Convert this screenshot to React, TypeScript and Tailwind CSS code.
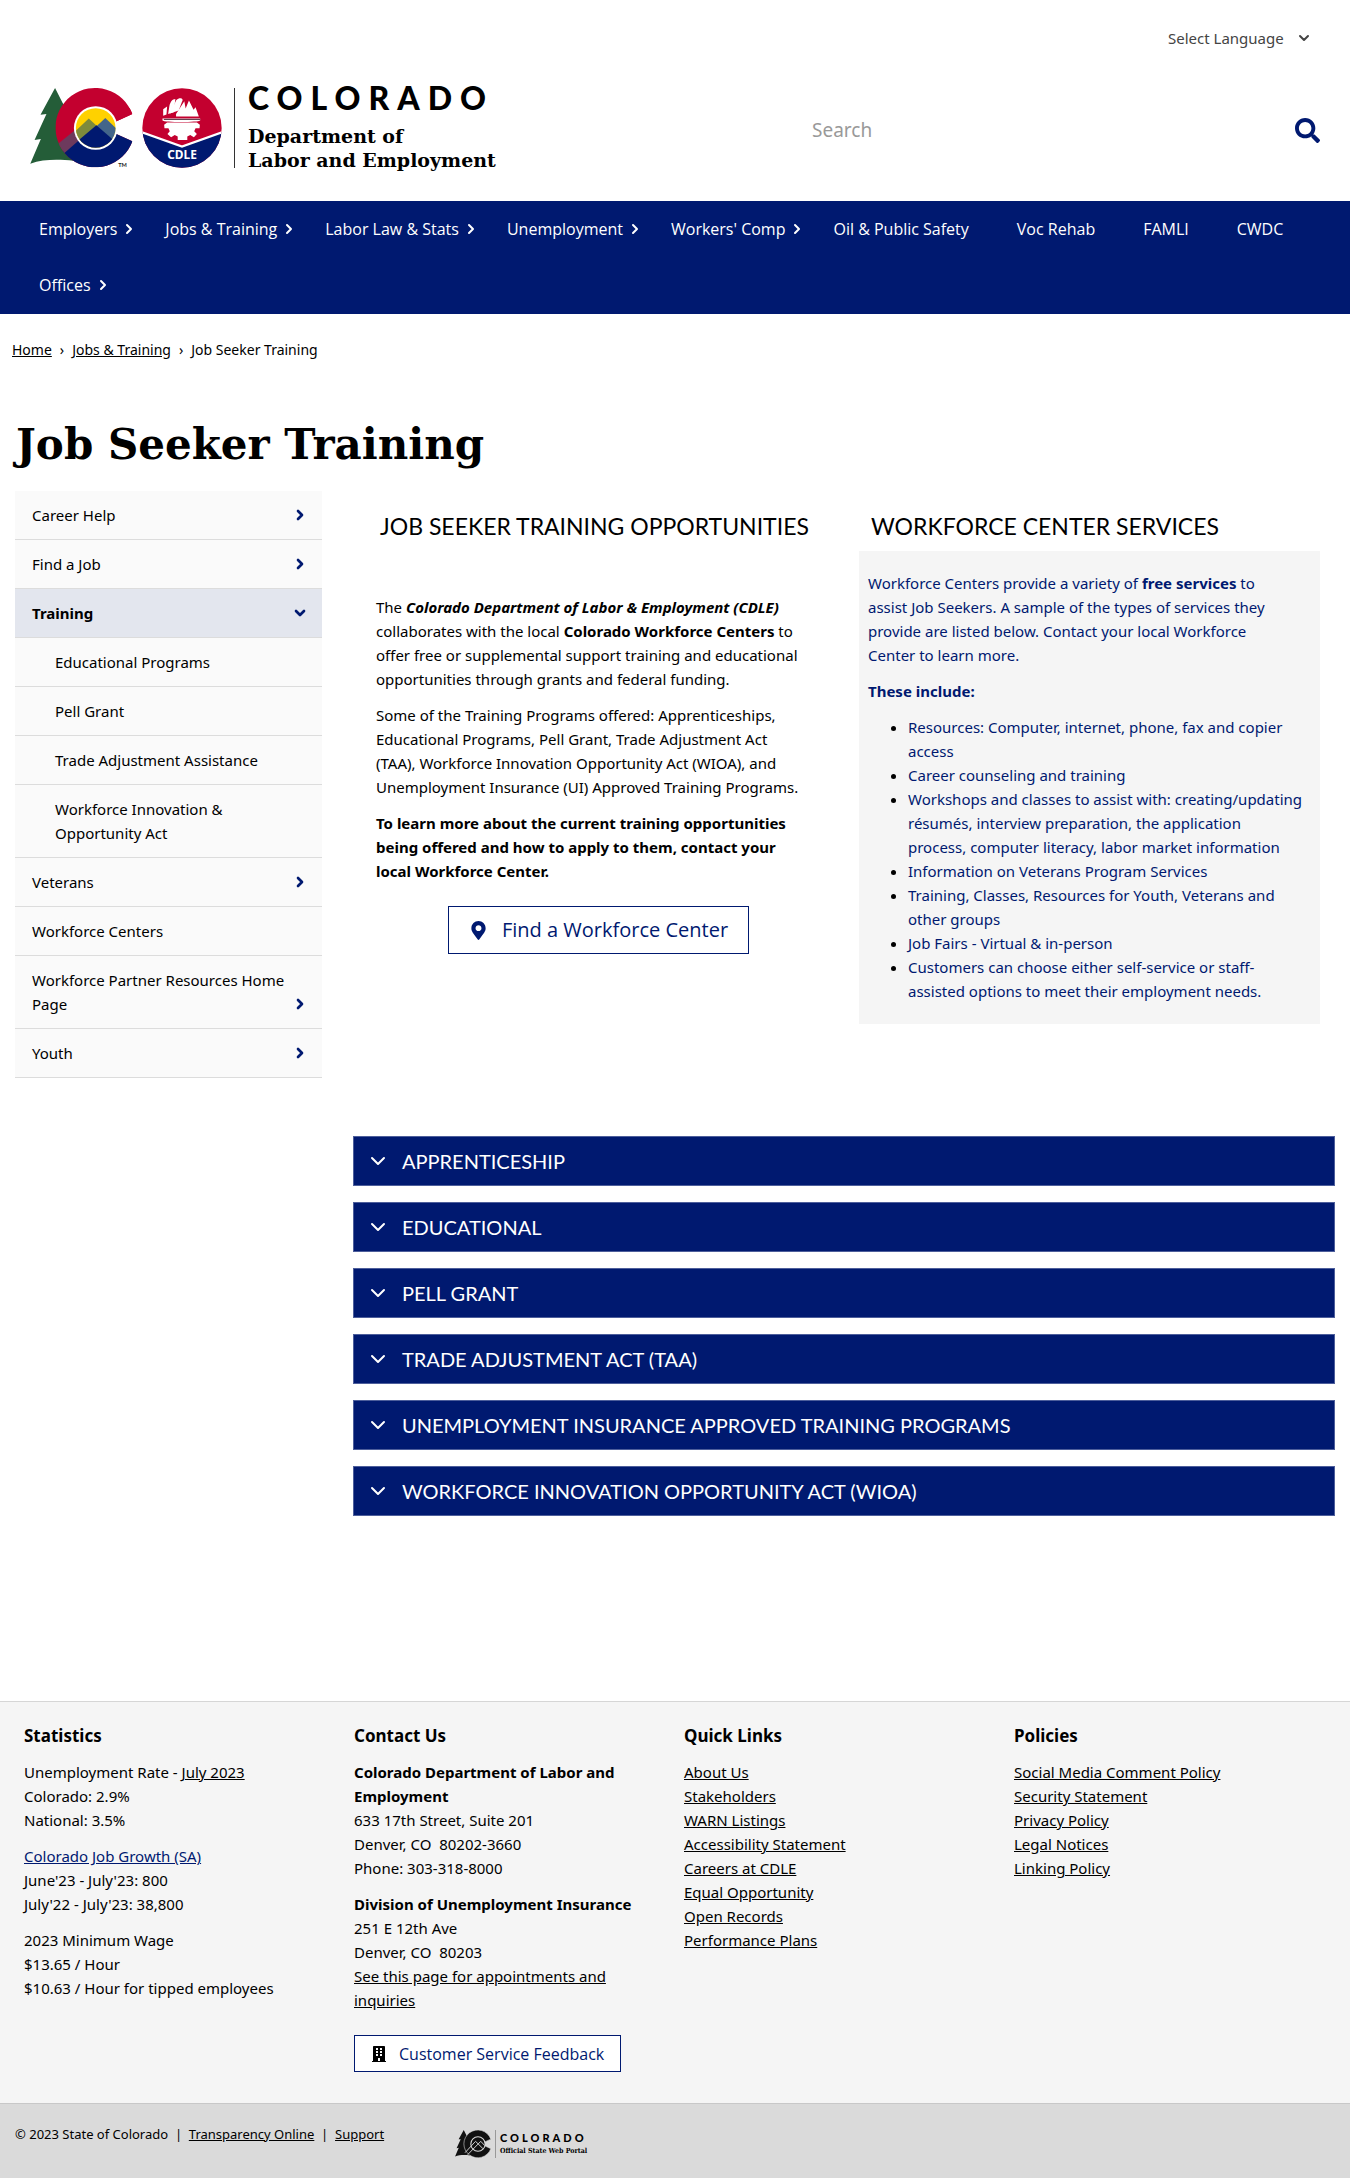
import type { ReactNode } from "react";
import { ChevronDown, ChevronRight } from "lucide-react";
import { FaBuilding, FaMapMarkerAlt, FaSearch } from "react-icons/fa";

const navItems: { label: string; menu?: boolean }[] = [
  { label: "Employers", menu: true },
  { label: "Jobs & Training", menu: true },
  { label: "Labor Law & Stats", menu: true },
  { label: "Unemployment", menu: true },
  { label: "Workers' Comp", menu: true },
  { label: "Oil & Public Safety" },
  { label: "Voc Rehab" },
  { label: "FAMLI" },
  { label: "CWDC" },
  { label: "Offices", menu: true },
];

type SideItem = { label: string; kind?: "more" | "open" | "sub" };

const sideItems: SideItem[] = [
  { label: "Career Help", kind: "more" },
  { label: "Find a Job", kind: "more" },
  { label: "Training", kind: "open" },
  { label: "Educational Programs", kind: "sub" },
  { label: "Pell Grant", kind: "sub" },
  { label: "Trade Adjustment Assistance", kind: "sub" },
  { label: "Workforce Innovation & Opportunity Act", kind: "sub" },
  { label: "Veterans", kind: "more" },
  { label: "Workforce Centers" },
  { label: "Workforce Partner Resources Home Page", kind: "more" },
  { label: "Youth", kind: "more" },
];

const services = [
  "Resources: Computer, internet, phone, fax and copier access",
  "Career counseling and training",
  "Workshops and classes to assist with: creating/updating résumés, interview preparation, the application process,\u00a0computer literacy, labor market information",
  "Information on Veterans Program Services",
  "Training, Classes, Resources for Youth, Veterans and other groups",
  "Job Fairs - Virtual & in-person",
  "Customers can choose either self-service or staff-assisted options to meet their employment needs.",
];

const accordions = [
  "APPRENTICESHIP",
  "EDUCATIONAL",
  "PELL GRANT",
  "TRADE ADJUSTMENT ACT (TAA)",
  "UNEMPLOYMENT INSURANCE APPROVED TRAINING PROGRAMS",
  "WORKFORCE INNOVATION OPPORTUNITY ACT (WIOA)",
];

const quickLinks = [
  "About Us",
  "Stakeholders",
  "WARN Listings",
  "Accessibility Statement",
  "Careers at CDLE",
  "Equal Opportunity",
  "Open Records",
  "Performance Plans",
];

const policies = [
  "Social Media Comment Policy",
  "Security Statement",
  "Privacy Policy",
  "Legal Notices",
  "Linking Policy",
];

const TREE =
  "M75 0 L31 81 L49 79 L13 157 L32 154 L0 229 C40 214 90 216 130 220 L150 120 L98 45 Z";
const LETTER_C = "M309 79 A120 120 0 1 0 309 161 L252 135 L198 121 L248 107 Z";

/* State mark: pine tree and the letter C around a mountain scene. */
function StateMark() {
  return (
    <svg viewBox="0 0 310 242" className="h-[80px] w-[103px]" aria-hidden="true">
      <defs>
        <clipPath id="letter-c">
          <path d={LETTER_C} />
        </clipPath>
        <clipPath id="scene">
          <circle cx="198" cy="121" r="60" />
        </clipPath>
      </defs>
      <path d={TREE} fill="#245d38" />
      <g clipPath="url(#letter-c)">
        <rect x="70" width="240" height="242" fill="#c3002f" />
        <path d="M70 215 L150 150 L198 110 L320 110 V242 H70 Z" fill="#001970" />
        <path d="M240 60 H320 V121 H240 Z" fill="#c3002f" />
        <path d="M70 180 L150 116 V156 L70 226 Z" fill="#6d3a5d" />
      </g>
      <circle cx="198" cy="121" r="66" fill="#fff" />
      <g clipPath="url(#scene)">
        <rect x="130" y="55" width="140" height="140" fill="#ffd100" />
        <path d="M130 137 L177 92 L205 118 L150 168 L130 170 Z" fill="#7d8a3c" />
        <path d="M227 91 L198 118 L250 170 L270 132 Z" fill="#43658a" />
        <path d="M130 172 L200 113 L266 170 V200 H130 Z" fill="#001970" />
      </g>
      <text x="266" y="240" fontSize="17" fontWeight="700" fontFamily="Lato" fill="#222">
        TM
      </text>
    </svg>
  );
}

/* Round department seal: hard hat over a gear, with the CDLE initials. */
function CdleMark() {
  return (
    <svg viewBox="0 0 242 242" className="size-[80px]" aria-label="CDLE" role="img">
      <defs>
        <clipPath id="seal">
          <circle cx="121" cy="121" r="120" />
        </clipPath>
      </defs>
      <g clipPath="url(#seal)">
        <rect width="242" height="242" fill="#c3002f" />
        <path d="M0 134 L121 176 L242 134 V242 H0 Z" fill="#001970" />
        <path d="M0 134 L121 177 L242 134" fill="none" stroke="#fff" strokeWidth="7" />
      </g>
      <g fill="#fff">
        <path d="M64 84 V64 L76 56 L74 80 Z" />
        <path d="M79 79 L83 54 C86 40 92 34 101 33 L96 73 Z" />
        <path d="M84 77 L104 36 C112 29 122 30 123 36 L111 68 Z" />
        <path d="M103 79 L128 40 L132 62 L142 38 L156 66 L162 58 L172 86 H103 Z" />
        <path d="M62 92 H176 V98 C172 104 66 104 62 98 Z" />
        <path
          fillRule="evenodd"
          d="M76 104 H166 L175 111 L174 122 L162 122 L158 131 L166 139 L157 149 L146 142 L137 147 V157 H108 V147 L99 142 L88 149 L77 139 L84 131 L80 122 L68 122 L67 111 Z"
        />
      </g>
      <path d="M66 95 H176" stroke="#4a2a3a" strokeWidth="3" />
      <text
        x="121"
        y="214"
        textAnchor="middle"
        fontSize="36"
        fontWeight="700"
        fontFamily="Noto Sans"
        fill="#fff"
      >
        CDLE
      </text>
    </svg>
  );
}

function MonoMark() {
  return (
    <svg viewBox="0 0 310 242" className="h-7 w-9" aria-hidden="true">
      <path d={TREE} fill="#111" />
      <path d={LETTER_C} fill="#111" stroke="#dadada" strokeWidth="5" />
      <circle cx="198" cy="121" r="62" fill="#111" stroke="#dadada" strokeWidth="9" />
      <path
        d="M86 196 L177 98 L240 160 M110 212 L222 98 L254 132"
        fill="none"
        stroke="#dadada"
        strokeWidth="8"
      />
    </svg>
  );
}

function UnderlinedLink({ children }: { children: ReactNode }) {
  return (
    <a href="#" className="underline">
      {children}
    </a>
  );
}

function LinkList({ title, links }: { title: string; links: string[] }) {
  return (
    <section className="pr-6">
      <h2 className="mb-3 text-[17px] leading-6 font-bold">{title}</h2>
      <ul>
        {links.map((link) => (
          <li key={link}>
            <UnderlinedLink>{link}</UnderlinedLink>
          </li>
        ))}
      </ul>
    </section>
  );
}

function Header() {
  return (
    <header>
      <div className="flex h-[76px] items-center justify-end pr-[38px]">
        <div className="relative flex items-center text-[#444]">
          <select
            aria-label="Select Language"
            className="appearance-none bg-transparent pr-7 text-[15px] leading-6"
          >
            <option>Select Language</option>
          </select>
          <ChevronDown className="pointer-events-none absolute right-0 size-4" strokeWidth={3} />
        </div>
      </div>
      <div className="flex min-h-[104px] items-center justify-between px-[30px]">
        <a href="#" className="flex items-center">
          <StateMark />
          <span className="ml-[9px]">
            <CdleMark />
          </span>
          <span className="ml-3 h-20 border-l border-[#333]" />
          <span className="ml-[13px] flex flex-col">
            <span className="font-[Lato] text-[32px] leading-7 font-black tracking-[8px]">COLORADO</span>
            <span className="mt-3 font-['DejaVu_Serif'] text-[19px] leading-6 font-bold">
              Department of
              <br />
              Labor and Employment
            </span>
          </span>
        </a>
        <form className="flex w-[508px] items-center pt-1" onSubmit={(e) => e.preventDefault()}>
          <input
            type="search"
            aria-label="Search"
            placeholder="Search"
            className="min-w-0 flex-1 text-[19px] leading-6 outline-none placeholder:text-[#999]"
          />
          <button type="submit" aria-label="Search" className="text-[#001970]">
            <FaSearch size={25} />
          </button>
        </form>
      </div>
      <nav aria-label="Main" className="mt-[21px] bg-[#001970] pr-4 pb-px pl-[15px] text-white">
        <ul className="flex flex-wrap font-['Open_Sans'] text-[16px]">
          {navItems.map(({ label, menu }) => (
            <li key={label}>
              <a href="#" className="flex h-14 items-center pl-6">
                {label}
                <span className="flex w-6 justify-center">
                  {menu && <ChevronRight className="size-4" strokeWidth={3} />}
                </span>
              </a>
            </li>
          ))}
        </ul>
      </nav>
    </header>
  );
}

function Sidebar() {
  return (
    <nav aria-label="Section" className="w-[307px] shrink-0">
      <ul>
        {sideItems.map(({ label, kind }) => (
          <li key={label} className="border-b border-[#dcdcdc]">
            <a
              href="#"
              className={
                "flex items-end justify-between py-3 pr-[14px] " +
                (kind === "sub" ? "pl-10 " : "pl-[17px] ") +
                (kind === "open" ? "bg-[#e3e6ee] font-bold" : "bg-[#fafafa]")
              }
            >
              <span className={kind === "sub" ? "max-w-[220px]" : "max-w-[260px]"}>{label}</span>
              {kind === "more" && (
                <ChevronRight className="my-1 size-4 shrink-0 text-[#001970]" strokeWidth={4} />
              )}
              {kind === "open" && (
                <ChevronDown className="my-1 size-4 shrink-0 text-[#001970]" strokeWidth={4} />
              )}
            </a>
          </li>
        ))}
      </ul>
    </nav>
  );
}

function Content() {
  return (
    <div className="min-w-0 flex-1">
      <div className="grid grid-cols-2 pt-[19px]">
        <section className="px-[23px]">
          <h2 className="ml-1 font-[Lato] text-[23px] leading-8">JOB SEEKER TRAINING OPPORTUNITIES</h2>
          <div className="mt-[53px] space-y-3 pr-4">
            <p>
              The <strong className="italic">Colorado Department of Labor &amp; Employment (CDLE)</strong>{" "}
              collaborates with the local <strong>Colorado Workforce Centers</strong> to offer free or
              supplemental support training and educational opportunities through grants and federal
              funding.
            </p>
            <p>
              Some of the Training Programs offered: Apprenticeships, Educational Programs, Pell Grant,
              Trade Adjustment Act (TAA), Workforce Innovation Opportunity Act (WIOA), and Unemployment
              Insurance (UI) Approved Training Programs.
            </p>
            <p className="font-bold">
              To learn more about the current training opportunities being offered and how to apply to
              them, contact your local Workforce Center.
            </p>
          </div>
          <div className="mt-[23px] flex justify-center">
            <a
              href="#"
              className="flex h-12 items-center gap-[14px] border border-[#001970] px-5 font-['Open_Sans'] text-[20px] text-[#001970]"
            >
              <FaMapMarkerAlt size={19} />
              Find a Workforce Center
            </a>
          </div>
        </section>
        <section className="px-[15px]">
          <h2 className="ml-3 font-[Lato] text-[23px] leading-8">WORKFORCE CENTER SERVICES</h2>
          <div className="mt-[9px] space-y-3 bg-[#f5f5f5] px-[9px] pt-5 pb-[21px] text-[#001970]">
            <p className="pr-6">
              Workforce Centers provide a variety of <strong>free services</strong> to assist Job Seekers.
              A sample of the types of services they provide are listed below. Contact your local
              Workforce Center to learn more.
            </p>
            <p className="font-bold">These include:</p>
            <ul className="list-disc pl-10 marker:text-black">
              {services.map((service) => (
                <li key={service}>{service}</li>
              ))}
            </ul>
          </div>
        </section>
      </div>
      <div className="mt-28 space-y-4">
        {accordions.map((title) => (
          <button
            key={title}
            type="button"
            aria-expanded="false"
            className="flex h-[50px] w-full items-center gap-3 border border-[#4d5e9b] bg-[#001970] px-3 text-left font-[Lato] text-[20px] text-white"
          >
            <ChevronDown className="size-6" strokeWidth={2} />
            {title}
          </button>
        ))}
      </div>
    </div>
  );
}

function Footer() {
  return (
    <footer>
      <div className="grid grid-cols-4 border-t border-[#d6d6d6] bg-[#f5f5f5] pt-[22px] pr-1.5 pb-[31px] pl-6">
        <section className="space-y-3 pr-6">
          <h2 className="text-[17px] leading-6 font-bold">Statistics</h2>
          <p>
            Unemployment Rate - <UnderlinedLink>July 2023</UnderlinedLink>
            <br />
            Colorado: 2.9%
            <br />
            National: 3.5%
          </p>
          <p>
            <a href="#" className="text-[#001970] underline">
              Colorado Job Growth (SA)
            </a>
            <br />
            June'23 - July'23: 800
            <br />
            July'22 - July'23: 38,800
          </p>
          <p>
            2023 Minimum Wage
            <br />
            $13.65 / Hour
            <br />
            $10.63 / Hour for tipped employees
          </p>
        </section>
        <section className="space-y-3 pr-6">
          <h2 className="text-[17px] leading-6 font-bold">Contact Us</h2>
          <p>
            <strong>Colorado Department of Labor and Employment</strong>
            <br />
            633 17th Street, Suite 201
            <br />
            Denver, CO&nbsp; 80202-3660
            <br />
            Phone: 303-318-8000
          </p>
          <p>
            <strong>Division of Unemployment Insurance</strong>
            <br />
            251 E 12th Ave
            <br />
            Denver, CO&nbsp; 80203
            <br />
            <UnderlinedLink>See this page for appointments and inquiries</UnderlinedLink>
          </p>
          <div className="flex pt-[11px]">
            <a
              href="#"
              className="flex h-[37px] items-center gap-3 border border-[#001970] bg-white px-4 font-['Open_Sans'] text-[16px] text-[#001970]"
            >
              <FaBuilding size={16} className="text-black" />
              Customer Service Feedback
            </a>
          </div>
        </section>
        <LinkList title="Quick Links" links={quickLinks} />
        <LinkList title="Policies" links={policies} />
      </div>
      <div className="flex min-h-[75px] items-start border-t border-[#c8c8c8] bg-[#dadada] px-[15px] pt-[18px]">
        <p className="w-[440px] text-[13px] leading-6">
          © 2023 State of Colorado &nbsp;|&nbsp; <UnderlinedLink>Transparency Online</UnderlinedLink>{" "}
          &nbsp;|&nbsp; <UnderlinedLink>Support</UnderlinedLink>
        </p>
        <a href="#" className="mt-2 flex items-center">
          <MonoMark />
          <span className="ml-1 h-7 border-l border-[#999]" />
          <span className="ml-1 flex flex-col">
            <span className="font-[Lato] text-[11px] leading-[14px] font-black tracking-[3px]">COLORADO</span>
            <span className="font-['DejaVu_Serif_Condensed'] text-[7px] leading-3 font-bold">
              Official State Web Portal
            </span>
          </span>
        </a>
      </div>
    </footer>
  );
}

export default function App() {
  return (
    <div className="bg-white font-['Noto_Sans',sans-serif] text-[15px] leading-6 text-black">
      <Header />
      <main className="pt-6">
        <nav aria-label="Breadcrumb" className="px-3 text-[14px] leading-6">
          <ol className="flex gap-2">
            <li>
              <UnderlinedLink>Home</UnderlinedLink>
            </li>
            <li aria-hidden="true">›</li>
            <li>
              <UnderlinedLink>Jobs &amp; Training</UnderlinedLink>
            </li>
            <li aria-hidden="true">›</li>
            <li>Job Seeker Training</li>
          </ol>
        </nav>
        <h1 className="mt-[55px] px-4 font-['DejaVu_Serif'] text-[42px] leading-[56px] font-bold">
          Job Seeker Training
        </h1>
        <div className="mt-[18px] mb-[185px] flex items-start gap-[31px] px-[15px]">
          <Sidebar />
          <Content />
        </div>
      </main>
      <Footer />
    </div>
  );
}
